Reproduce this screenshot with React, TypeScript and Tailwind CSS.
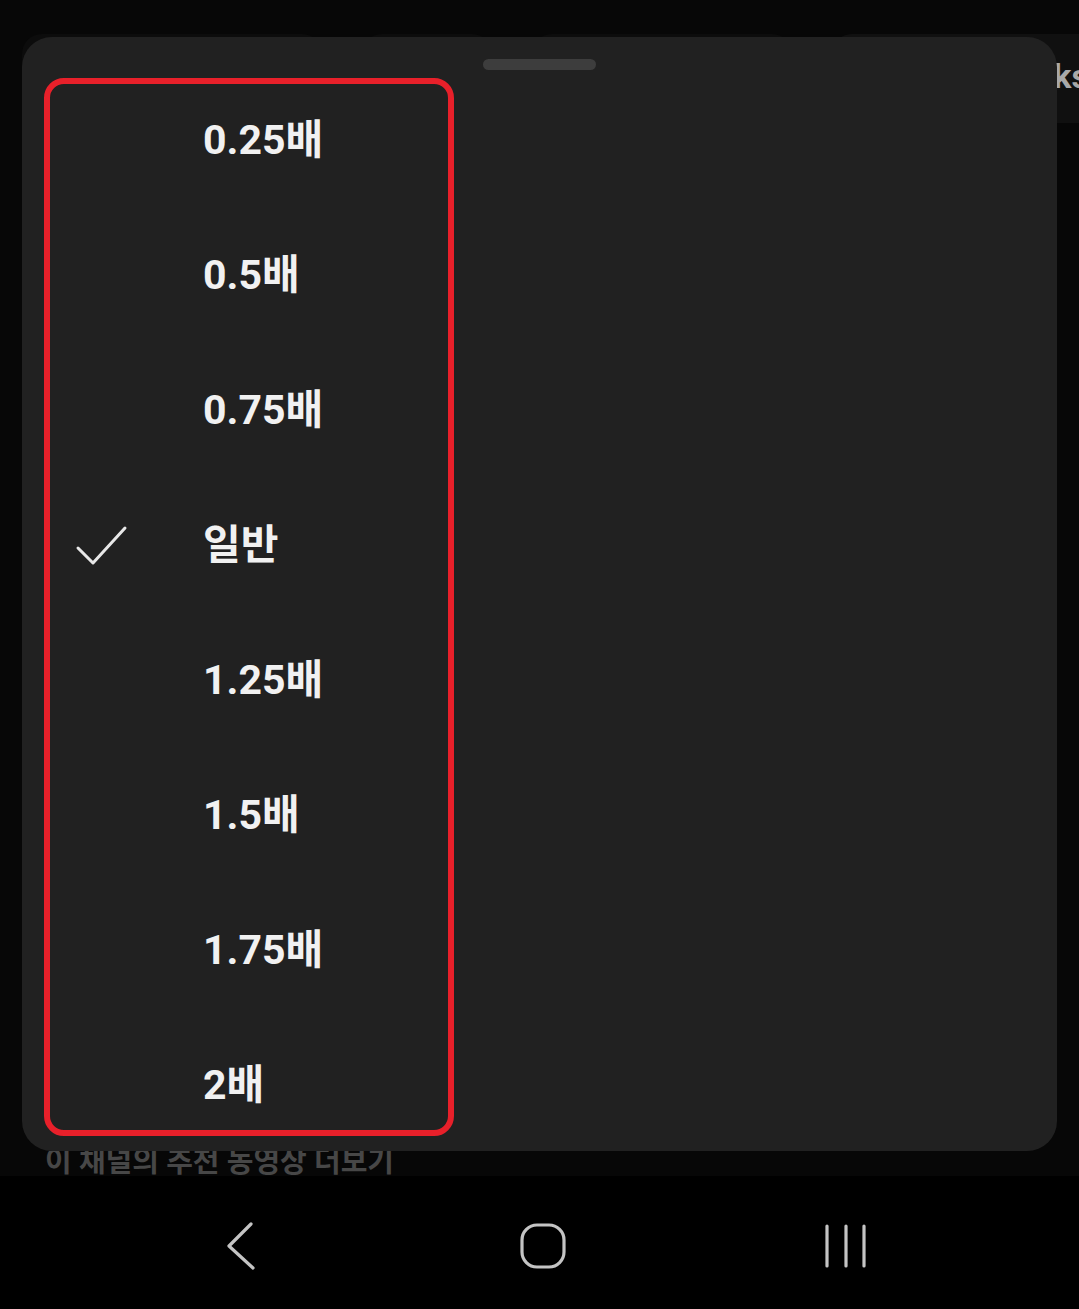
import React from 'react';

const speeds = ['0.25배', '0.5배', '0.75배', '일반', '1.25배', '1.5배', '1.75배', '2배'];
const selected = '일반';

function Check() {
  return (
    <svg width="56" height="44" viewBox="0 0 56 44" fill="none">
      <polyline
        points="3,24 18,39 50,4"
        stroke="#e8e8e8"
        strokeWidth="3"
        strokeLinecap="round"
        strokeLinejoin="round"
      />
    </svg>
  );
}

function NavBar() {
  return (
    <div className="h-[133px] bg-black relative">
      {/* back */}
      <svg className="absolute left-[224px] top-[46px]" width="34" height="48" viewBox="0 0 34 48" fill="none">
        <polyline points="27,2 5,24 29,46" stroke="#c4c4c4" strokeWidth="3.2" strokeLinecap="round" strokeLinejoin="round" />
      </svg>
      {/* home */}
      <svg className="absolute left-[519px] top-[46px]" width="48" height="48" viewBox="0 0 48 48" fill="none">
        <rect x="3" y="3" width="42" height="42" rx="15" stroke="#c4c4c4" strokeWidth="3.2" />
      </svg>
      {/* recents */}
      <svg className="absolute left-[822px] top-[48px]" width="48" height="44" viewBox="0 0 48 44" fill="none">
        <line x1="5" y1="2" x2="5" y2="42" stroke="#c4c4c4" strokeWidth="3.2" strokeLinecap="round" />
        <line x1="24" y1="2" x2="24" y2="42" stroke="#c4c4c4" strokeWidth="3.2" strokeLinecap="round" />
        <line x1="42" y1="2" x2="42" y2="42" stroke="#c4c4c4" strokeWidth="3.2" strokeLinecap="round" />
      </svg>
    </div>
  );
}

export default function App() {
  return (
    <div
      className="relative w-full h-[1309px] bg-[#070707] overflow-hidden flex flex-col"
      style={{ fontFamily: 'Roboto, "Noto Sans CJK KR", sans-serif' }}
    >
      {/* chip row behind the sheet */}
      <div className="absolute left-0 right-0 top-[34px] h-[89px] flex gap-[40px] pl-[22px]">
        <div className="w-[300px] h-full rounded-t-[20px] bg-[#0c0c0c]" />
        <div className="w-[130px] h-full rounded-t-[20px] bg-[#0c0c0c]" />
        <div className="w-[260px] h-full rounded-t-[20px] bg-[#0c0c0c]" />
        <div className="flex-1 h-full rounded-tl-[20px] bg-[#101010] flex items-center justify-end">
          <span className="text-[34px] font-bold text-[#a8a8a8] mr-[-10px] mt-[-4px]">nks</span>
        </div>
      </div>

      <div className="relative pt-[37px] px-[22px]">
        <div className="relative h-[1114px] bg-[#212121] rounded-[30px] overflow-hidden">
          <div className="flex justify-center pt-[22px]">
            <div className="w-[113px] h-[11px] rounded-full bg-[#3d3d3d]" />
          </div>
          <ul className="mt-[3px]">
            {speeds.map((s) => (
              <li key={s} className="h-[135px] flex items-center">
                <div className="w-[181px] pl-[53px] flex items-center">
                  {s === selected && <Check />}
                </div>
                <span className="text-[41px] font-bold text-[#f1f1f1]">{s}</span>
              </li>
            ))}
          </ul>
          {/* highlight annotation */}
          <div className="absolute left-[22px] top-[41px] w-[410px] h-[1058px] border-[6px] border-[#e8202a] rounded-[20px] pointer-events-none" />
        </div>
      </div>

      <div className="h-[25px] overflow-hidden pl-[45px]">
        <div className="text-[29px] font-bold text-[#474747] leading-[29px] mt-[-3px]">이 채널의 추천 동영상 더보기</div>
      </div>

      <NavBar />
    </div>
  );
}
